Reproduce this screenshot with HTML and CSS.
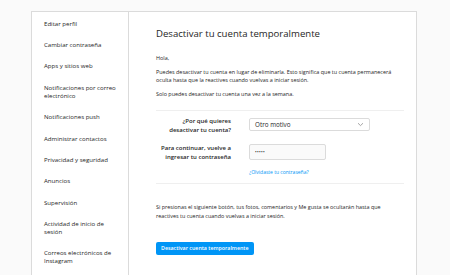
FILE: index.html
```html
<!DOCTYPE html>
<html>
    <head>
        <meta charset="utf-8">
        <title>Desactivar tu cuenta temporalmente</title>
        <link rel="stylesheet" href="styles.css">
    </head>
    <body>
        <div class="contain">
            <ul class="menu">
                <li>Editar perfil</li>
                <li>Cambiar contraseña</li>
                <li>Apps y sitios web</li>
                <li>Notificaciones por correo electrónico</li>
                <li>Notificaciones push</li>
                <li>Administrar contactos</li>
                <li>Privacidad y seguridad</li>
                <li>Anuncios</li>
                <li>Supervisión</li>
                <li>Actividad de inicio de sesión</li>
                <li>Correos electrónicos de Instagram</li>
            </ul>
            <div class="main">
                <h1>Desactivar tu cuenta temporalmente</h1>
                <p class="hola">Hola,</p>
                <p>Puedes desactivar tu cuenta en lugar de eliminarla. Esto significa que tu cuenta permanecerá oculta hasta que la reactives cuando vuelvas a iniciar sesión.</p>
                <p>Solo puedes desactivar tu cuenta una vez a la semana.</p>
                <div class="line"></div>
                <div class="form">
                    <label>¿Por qué quieres desactivar tu cuenta?</label>
                    <div class="select">
                        <span>Otro motivo</span>
                        <svg width="7" height="5" viewBox="0 0 7 5"><path d="M1 1.2 3.5 3.6 6 1.2" fill="none" stroke="#8e8e8e" stroke-width="0.8"/></svg>
                    </div>
                    <label>Para continuar, vuelve a ingresar tu contraseña</label>
                    <div class="field">
                        <div class="pass">•••••</div>
                        <a class="forgot">¿Olvidaste tu contraseña?</a>
                    </div>
                </div>
                <div class="line"></div>
                <p class="note">Si presionas el siguiente botón, tus fotos, comentarios y Me gusta se ocultarán hasta que reactives tu cuenta cuando vuelvas a iniciar sesión.</p>
                <div class="btn">Desactivar cuenta temporalmente</div>
            </div>
        </div>
    </body>
</html>
```

FILE: styles.css
```css
*{
    margin:0;
    padding:0;
    box-sizing:border-box;
}
body{
    background-color:#fafafa;
    font-family:"Open Sans","Liberation Sans",sans-serif;
    color:#262626;
    height:275px;
    overflow:hidden;
}
.contain{
    display:flex;
    width:386px;
    height:280px;
    margin:11px 0 0 31px;
    background-color:#fff;
    border:1px solid #dbdbdb;
}
.menu{
    list-style:none;
    width:97px;
    border-right:1px solid #dbdbdb;
    padding:1px 6px 0 12px;
}
.menu li{
    font-size:6.1px;
    line-height:8px;
    color:#262626;
    padding:6.7px 0;
}
.main{
    flex:1;
    padding:0 12px 0 27px;
}
h1{
    font-size:9.6px;
    font-weight:400;
    line-height:14px;
    margin:15px 0 13px;
}
.main p{
    font-size:5.45px;
    line-height:8px;
    margin-bottom:6px;
}
.line{
    height:1px;
    background-color:#efefef;
    margin:12px 0 6px;
}
.form{
    display:grid;
    grid-template-columns:75px 1fr;
    column-gap:18px;
    row-gap:9px;
    align-items:start;
}
.form label{
    font-size:6px;
    font-weight:600;
    line-height:9px;
    text-align:right;
}
.select{
    display:flex;
    align-items:center;
    justify-content:space-between;
    width:121px;
    height:13px;
    margin-top:1px;
    padding:0 5px 0 5px;
    border:1px solid #dbdbdb;
    border-radius:2px;
    font-size:6.3px;
    color:#262626;
}
.field{
    display:flex;
    flex-direction:column;
    align-items:flex-start;
}
.pass{
    width:77px;
    height:16px;
    padding:0 5px;
    border:1px solid #dbdbdb;
    border-radius:2px;
    background-color:#fafafa;
    font-size:4.5px;
    line-height:14px;
    letter-spacing:0.3px;
}
.forgot{
    font-size:5px;
    color:#0095f6;
    margin-top:9px;
    line-height:6px;
}
.form + .line{
    margin-top:8px;
}
.main p.note{
    line-height:9px;
    margin:19px 0 12px;
}
.btn{
    display:inline-block;
    background-color:#0095f6;
    color:#fff;
    font-size:5.3px;
    font-weight:600;
    line-height:13px;
    padding:0 5px;
    border-radius:2px;
}
```
